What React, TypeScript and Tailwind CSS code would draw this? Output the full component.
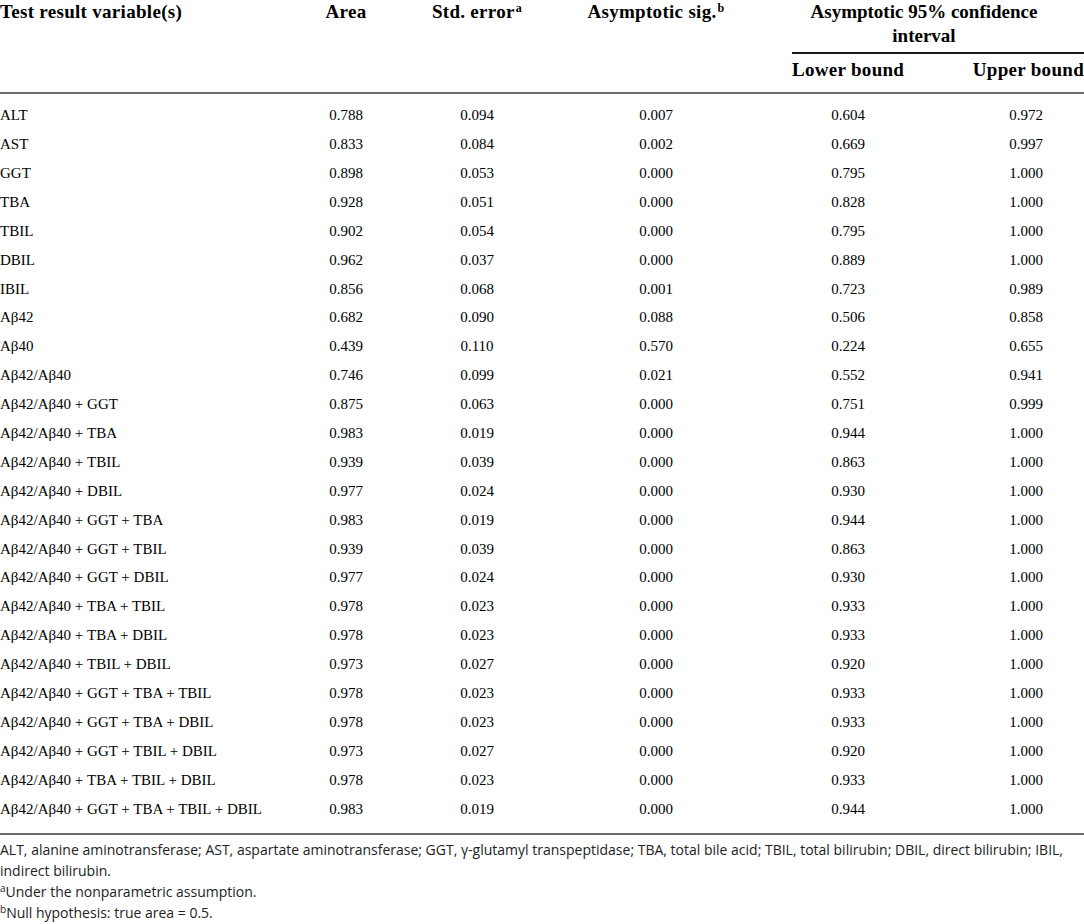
import React from 'react';

const rows: [string, string, string, string, string, string][] = [
  ['ALT', '0.788', '0.094', '0.007', '0.604', '0.972'],
  ['AST', '0.833', '0.084', '0.002', '0.669', '0.997'],
  ['GGT', '0.898', '0.053', '0.000', '0.795', '1.000'],
  ['TBA', '0.928', '0.051', '0.000', '0.828', '1.000'],
  ['TBIL', '0.902', '0.054', '0.000', '0.795', '1.000'],
  ['DBIL', '0.962', '0.037', '0.000', '0.889', '1.000'],
  ['IBIL', '0.856', '0.068', '0.001', '0.723', '0.989'],
  ['Aβ42', '0.682', '0.090', '0.088', '0.506', '0.858'],
  ['Aβ40', '0.439', '0.110', '0.570', '0.224', '0.655'],
  ['Aβ42/Aβ40', '0.746', '0.099', '0.021', '0.552', '0.941'],
  ['Aβ42/Aβ40 + GGT', '0.875', '0.063', '0.000', '0.751', '0.999'],
  ['Aβ42/Aβ40 + TBA', '0.983', '0.019', '0.000', '0.944', '1.000'],
  ['Aβ42/Aβ40 + TBIL', '0.939', '0.039', '0.000', '0.863', '1.000'],
  ['Aβ42/Aβ40 + DBIL', '0.977', '0.024', '0.000', '0.930', '1.000'],
  ['Aβ42/Aβ40 + GGT + TBA', '0.983', '0.019', '0.000', '0.944', '1.000'],
  ['Aβ42/Aβ40 + GGT + TBIL', '0.939', '0.039', '0.000', '0.863', '1.000'],
  ['Aβ42/Aβ40 + GGT + DBIL', '0.977', '0.024', '0.000', '0.930', '1.000'],
  ['Aβ42/Aβ40 + TBA + TBIL', '0.978', '0.023', '0.000', '0.933', '1.000'],
  ['Aβ42/Aβ40 + TBA + DBIL', '0.978', '0.023', '0.000', '0.933', '1.000'],
  ['Aβ42/Aβ40 + TBIL + DBIL', '0.973', '0.027', '0.000', '0.920', '1.000'],
  ['Aβ42/Aβ40 + GGT + TBA + TBIL', '0.978', '0.023', '0.000', '0.933', '1.000'],
  ['Aβ42/Aβ40 + GGT + TBA + DBIL', '0.978', '0.023', '0.000', '0.933', '1.000'],
  ['Aβ42/Aβ40 + GGT + TBIL + DBIL', '0.973', '0.027', '0.000', '0.920', '1.000'],
  ['Aβ42/Aβ40 + TBA + TBIL + DBIL', '0.978', '0.023', '0.000', '0.933', '1.000'],
  ['Aβ42/Aβ40 + GGT + TBA + TBIL + DBIL', '0.983', '0.019', '0.000', '0.944', '1.000'],
];

const cols = 'grid grid-cols-[286px_120px_142px_216px_168px_152px]';
const serif = { fontFamily: '"Liberation Serif", "Times New Roman", serif' };

const App = () => {
  return (
    <div className="w-[1084px] bg-white text-black">
      {/* Header */}
      <div
        className={`${cols} font-bold text-[19px] tracking-[0.3px] leading-[24px] border-b-2 border-[#6b6b6b]`}
        style={serif}
      >
        <div className="row-span-2">Test result variable(s)</div>
        <div className="row-span-2 text-center">Area</div>
        <div className="row-span-2 text-center">
          Std. error<sup className="text-[12px] ml-[1px]">a</sup>
        </div>
        <div className="row-span-2 text-center">
          Asymptotic sig.<sup className="text-[12px] ml-[1px]">b</sup>
        </div>
        <div className="col-span-2 ml-[28px] pr-[28px] h-[54px] border-b-2 border-[#1a1a1a] text-center tracking-[0px]">
          Asymptotic 95% confidence
          <br />
          interval
        </div>
        <div className="pl-[28px] pt-[4px] pb-[10px]">Lower bound</div>
        <div className="text-right pt-[4px] pb-[10px]">Upper bound</div>
      </div>

      {/* Body */}
      <div className="pt-[7px] pb-[10px] border-b-2 border-[#6b6b6b] text-[15px]" style={serif}>
        {rows.map((r, i) => (
          <div key={i} className={`${cols} h-[28.9px] items-center`}>
            <div>{r[0]}</div>
            <div className="text-center">{r[1]}</div>
            <div className="text-center">{r[2]}</div>
            <div className="text-center">{r[3]}</div>
            <div className="text-center">{r[4]}</div>
            <div className="text-center pl-[36px]">{r[5]}</div>
          </div>
        ))}
      </div>

      {/* Footnotes */}
      <div
        className="pt-[4px] text-[14px] leading-[21px] text-[#222]"
        style={{ fontFamily: '"Open Sans", "Noto Sans", sans-serif' }}
      >
        <p>
          ALT, alanine aminotransferase; AST, aspartate aminotransferase; GGT, γ-glutamyl transpeptidase; TBA, total
          bile acid; TBIL, total bilirubin; DBIL, direct bilirubin; IBIL, indirect bilirubin.
        </p>
        <p>
          <sup className="text-[10px]">a</sup>Under the nonparametric assumption.
        </p>
        <p>
          <sup className="text-[10px]">b</sup>Null hypothesis: true area = 0.5.
        </p>
      </div>
    </div>
  );
};

export default App;
